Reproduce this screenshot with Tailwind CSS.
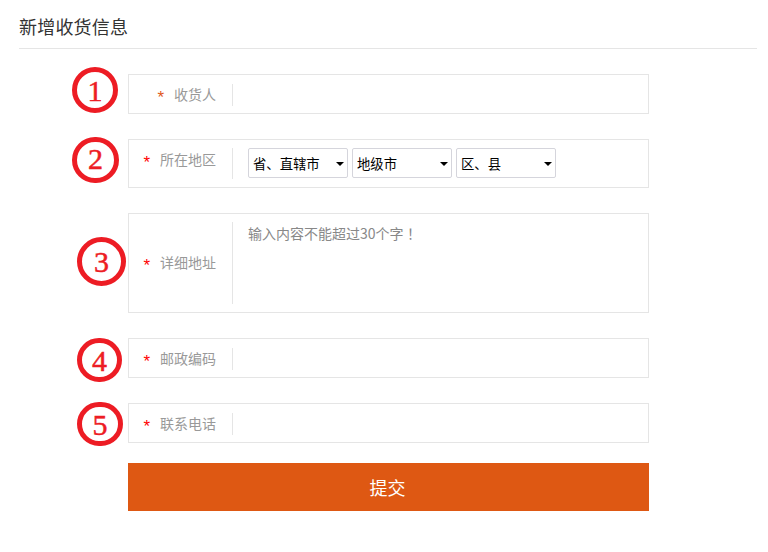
<!DOCTYPE html>
<html lang="zh-CN">
<head>
<meta charset="utf-8">
<script src="https://cdn.jsdelivr.net/npm/@tailwindcss/browser@4"></script>
</head>
<body class="bg-white font-['Noto_Sans_CJK_SC','Liberation_Sans',sans-serif]">
<div class="relative w-[768px] h-[552px] overflow-hidden">
  <div class="mx-[19px] w-[738px] h-[49px] border-b border-[#e5e5e5] text-[18px] leading-[26px] pt-[13px] tracking-[0.2px] text-[#333]">新增收货信息</div>

  <form class="ml-[128px] w-[521px] pt-[25px] flex flex-col">
    <div class="h-10 border border-[#e5e5e5] flex items-center">
      <div class="w-[104px] h-[22px] mt-[1px] border-r border-[#e5e5e5] flex items-center justify-end pr-4 text-[14px] text-[#999]"><span class="text-[#e0591a] text-[17px] font-['Liberation_Sans'] leading-none mr-[10px] pt-[5px]">*</span>收货人</div>
    </div>

    <div class="h-[49px] mt-[25px] border border-[#e5e5e5] flex items-center">
      <div class="w-[104px] h-[31px] border-r border-[#e5e5e5] flex items-center justify-end pr-4 text-[14px] text-[#999] pb-[8px]"><span class="text-[#f00] text-[17px] font-['Liberation_Sans'] leading-none mr-[10px] pt-[5px]">*</span>所在地区</div>
      <div class="flex gap-1 ml-[15px] mb-[1px]">
        <div class="relative">
          <select class="block w-[100px] h-[30px] bg-white border border-[#d5d5dc] rounded-[2px] text-[13.33px] text-black appearance-none pl-1 pt-[1px]"><option>省、直辖市</option></select>
          <svg class="absolute left-[88px] top-[14px] pointer-events-none" width="8" height="4" viewBox="0 0 8 4"><path d="M0 0H8L4 4Z" fill="#000"/></svg>
        </div>
        <div class="relative">
          <select class="block w-[100px] h-[30px] bg-white border border-[#d5d5dc] rounded-[2px] text-[13.33px] text-black appearance-none pl-1 pt-[1px]"><option>地级市</option></select>
          <svg class="absolute left-[88px] top-[14px] pointer-events-none" width="8" height="4" viewBox="0 0 8 4"><path d="M0 0H8L4 4Z" fill="#000"/></svg>
        </div>
        <div class="relative">
          <select class="block w-[100px] h-[30px] bg-white border border-[#d5d5dc] rounded-[2px] text-[13.33px] text-black appearance-none pl-1 pt-[1px]"><option>区、县</option></select>
          <svg class="absolute left-[88px] top-[14px] pointer-events-none" width="8" height="4" viewBox="0 0 8 4"><path d="M0 0H8L4 4Z" fill="#000"/></svg>
        </div>
      </div>
    </div>

    <div class="h-[100px] mt-[25px] border border-[#e5e5e5] flex items-center">
      <div class="w-[104px] h-[82px] border-r border-[#e5e5e5] flex items-center justify-end pr-4 text-[14px] text-[#999] pb-[1px]"><span class="text-[#f00] text-[17px] font-['Liberation_Sans'] leading-none mr-[10px] pt-[5px]">*</span>详细地址</div>
      <div class="self-start ml-[15px] mt-[7px] text-[14px] leading-[24px] text-[#888]">输入内容不能超过30个字<span lang="zh-TW" class="font-['Noto_Sans_CJK_TC']">！</span></div>
    </div>

    <div class="h-10 mt-[25px] border border-[#e5e5e5] flex items-center">
      <div class="w-[104px] h-[22px] mt-[1px] border-r border-[#e5e5e5] flex items-center justify-end pr-4 text-[14px] text-[#999]"><span class="text-[#f00] text-[17px] font-['Liberation_Sans'] leading-none mr-[10px] pt-[5px]">*</span>邮政编码</div>
    </div>

    <div class="h-10 mt-[25px] border border-[#e5e5e5] flex items-center">
      <div class="w-[104px] h-[22px] mt-[1px] border-r border-[#e5e5e5] flex items-center justify-end pr-4 text-[14px] text-[#999]"><span class="text-[#f00] text-[17px] font-['Liberation_Sans'] leading-none mr-[10px] pt-[5px]">*</span>联系电话</div>
    </div>

    <button type="button" class="h-12 mt-5 bg-[#de5813] text-white text-[18px] flex items-center justify-center pr-[2px]">提交</button>
  </form>

  <div class="absolute left-[72px] top-[67px] w-[46px] h-[46px] rounded-full border-[5px] border-[#ed1c24] text-[#ed1c24] font-['Liberation_Serif',serif] [-webkit-text-stroke:0.5px_#ed1c24] text-[30px] flex items-center justify-center">1</div>
  <div class="absolute left-[72px] top-[137px] w-[47px] h-[46px] rounded-full border-[5px] border-[#ed1c24] text-[#ed1c24] font-['Liberation_Serif',serif] [-webkit-text-stroke:0.5px_#ed1c24] text-[30px] flex items-center justify-center pb-[3px]">2</div>
  <div class="absolute left-[77px] top-[237px] w-[49px] h-[49px] rounded-full border-[5px] border-[#ed1c24] text-[#ed1c24] font-['Liberation_Serif',serif] [-webkit-text-stroke:0.5px_#ed1c24] text-[30px] flex items-center justify-center">3</div>
  <div class="absolute left-[77px] top-[338px] w-[45px] h-[44px] rounded-full border-[5px] border-[#ed1c24] text-[#ed1c24] font-['Liberation_Serif',serif] [-webkit-text-stroke:0.5px_#ed1c24] text-[30px] flex items-center justify-center">4</div>
  <div class="absolute left-[77px] top-[402px] w-[46px] h-[44px] rounded-full border-[5px] border-[#ed1c24] text-[#ed1c24] font-['Liberation_Serif',serif] [-webkit-text-stroke:0.5px_#ed1c24] text-[30px] flex items-center justify-center">5</div>
</div>
</body>
</html>
